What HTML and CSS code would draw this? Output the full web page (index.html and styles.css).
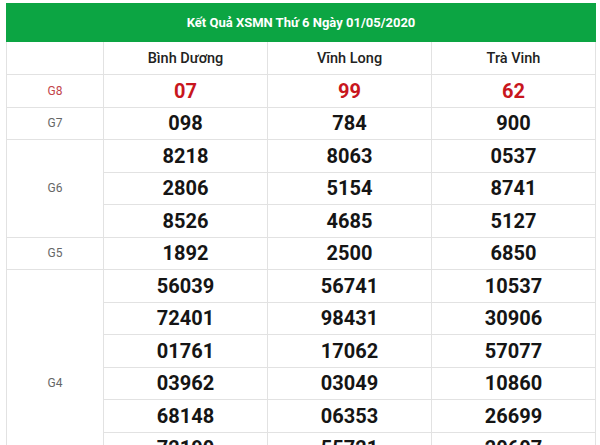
FILE: index.html
```html
<!DOCTYPE html>
<html lang="vi">
<head>
<meta charset="utf-8">
<title>Kết Quả XSMN</title>
<link rel="stylesheet" href="styles.css">
</head>
<body>
<table class="kq">
  <colgroup>
    <col class="c-label"><col class="c-prov"><col class="c-prov"><col class="c-prov">
  </colgroup>
  <thead>
    <tr class="title-row"><th colspan="4">Kết Quả XSMN Thứ 6 Ngày 01/05/2020</th></tr>
    <tr class="prov-row"><th></th><th>Bình Dương</th><th>Vĩnh Long</th><th>Trà Vinh</th></tr>
  </thead>
  <tbody>
    <tr class="g8"><td class="lbl">G8</td><td>07</td><td>99</td><td>62</td></tr>
    <tr><td class="lbl">G7</td><td>098</td><td>784</td><td>900</td></tr>
    <tr><td class="lbl" rowspan="3">G6</td><td>8218</td><td>8063</td><td>0537</td></tr>
    <tr><td>2806</td><td>5154</td><td>8741</td></tr>
    <tr><td>8526</td><td>4685</td><td>5127</td></tr>
    <tr><td class="lbl">G5</td><td>1892</td><td>2500</td><td>6850</td></tr>
    <tr><td class="lbl" rowspan="7">G4</td><td>56039</td><td>56741</td><td>10537</td></tr>
    <tr><td>72401</td><td>98431</td><td>30906</td></tr>
    <tr><td>01761</td><td>17062</td><td>57077</td></tr>
    <tr><td>03962</td><td>03049</td><td>10860</td></tr>
    <tr><td>68148</td><td>06353</td><td>26699</td></tr>
    <tr><td>72190</td><td>55721</td><td>20607</td></tr>
    <tr><td>41385</td><td>83620</td><td>94152</td></tr>
  </tbody>
</table>
</body>
</html>
```
FILE: styles.css
```css
html, body {
  margin: 0;
  padding: 0;
  background: #ffffff;
}
body {
  padding: 3px 5px 0 6px;
  font-family: Roboto, "Liberation Sans", Arial, sans-serif;
  color: #111;
}
.kq {
  width: 589px;
  border-collapse: collapse;
  table-layout: fixed;
}
.c-label { width: 97px; }
.c-prov { width: 164px; }
.kq th, .kq td {
  border: 1px solid #e2e2e2;
  text-align: center;
  vertical-align: middle;
  padding: 0;
}
.title-row th {
  background: #0ca543;
  border-color: #0ca543;
  color: #ffffff;
  font-size: 13px;
  font-weight: 700;
  height: 37px;
}
.prov-row th {
  height: 32px;
  font-size: 14.5px;
  font-weight: 500;
  color: #222;
}
.kq td {
  height: 31.5px;
  font-size: 20px;
  font-weight: 700;
  color: #151515;
}
.kq td.lbl {
  font-size: 12px;
  font-weight: 400;
  color: #666;
}
.g8 td {
  color: #c8161d;
}
.g8 td.lbl {
  color: #c2444a;
}
```
